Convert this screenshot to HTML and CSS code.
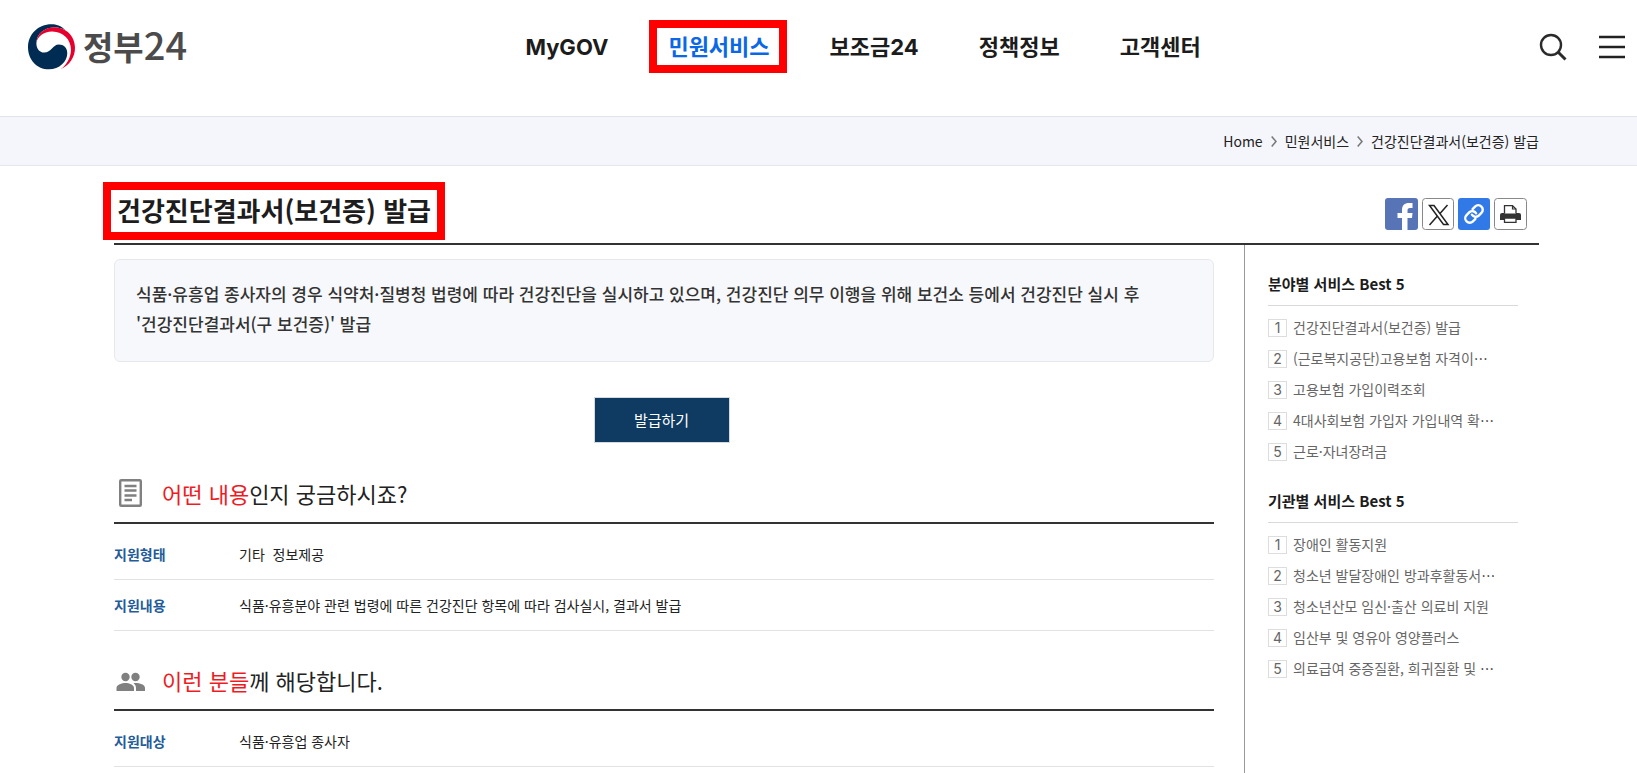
FILE: index.html
```html
<!DOCTYPE html>
<html lang="ko">
<head>
<meta charset="utf-8">
<meta name="viewport" content="width=device-width, initial-scale=1">
<title>건강진단결과서(보건증) 발급 | 정부24</title>
<link rel="stylesheet" href="styles.css">
</head>
<body>
<header class="header">
  <a class="logo" href="#">
    <svg class="logo-mark" viewBox="0 0 140 135" aria-hidden="true">
      <path fill="#002c53" d="M112 18C98 4 84 0 70 0C30 0 0 30 0 68C0 106 27 134 62 134C94 134 117 110 117 86C117 70 106 60 92 60C74 60 70 84 48 84C34 84 25 72 25 57C25 28 50 10 78 9C92 9 103 13 112 18Z"/>
      <path fill="#e6002d" d="M26 52C30 35 45 22 72 21C106 21 128 46 128 75C128 100 114 122 97 134C124 122 140 98 140 70C140 34 112 10 80 9C50 9 27 28 26 52Z"/>
    </svg>
    <span class="logo-text">정부<span class="logo-number">24</span></span>
  </a>
  <nav class="nav" aria-label="주 메뉴">
    <a href="#">MyGOV</a>
    <a class="is-active" href="#">민원서비스</a>
    <a href="#">보조금24</a>
    <a href="#">정책정보</a>
    <a href="#">고객센터</a>
  </nav>
  <div class="tools">
    <button type="button" aria-label="검색">
      <svg width="28" height="28" viewBox="0 0 28 28" fill="none" stroke="#2b2b2b"><circle cx="12" cy="12" r="10" stroke-width="2.4"/><path stroke-width="3" d="M19 19l7.500 7.500"/></svg>
    </button>
    <button type="button" aria-label="전체메뉴">
      <svg width="26" height="28" viewBox="0 0 26 28" stroke="#222" stroke-width="2.600"><path d="M0 4h26M0 14h26M0 24h26"/></svg>
    </button>
  </div>
</header>

<nav class="crumbs" aria-label="현재 위치">
  <a href="#">Home</a>
  <svg width="6" height="12" viewBox="0 0 6 12" fill="none" stroke="#777" stroke-width="1.500"><path d="M.7 1.500L5 6.500L.7 11.500"/></svg>
  <a href="#">민원서비스</a>
  <svg width="6" height="12" viewBox="0 0 6 12" fill="none" stroke="#777" stroke-width="1.500"><path d="M.7 1.500L5 6.500L.7 11.500"/></svg>
  <a href="#">건강진단결과서(보건증) 발급</a>
</nav>

<div class="page">
  <div class="title-bar">
    <h1 class="title">건강진단결과서(보건증) 발급</h1>
    <div class="share">
      <button type="button" aria-label="페이스북 공유">
        <svg width="33" height="32" viewBox="0 0 33 32"><rect width="33" height="32" rx="3" fill="#5674b6"/><path fill="#fff" d="M17 32V20H12.500V15H17V12C17 7.500 19.500 5 24 5H27.500V10H25C23 10 22.500 11 22.500 12.500V15H27.500L27 20H22.500V32Z"/></svg>
      </button>
      <button type="button" aria-label="X 공유">
        <svg width="32" height="32" viewBox="0 0 32 32"><rect x=".5" y=".5" width="31" height="31" rx="3" fill="#fff" stroke="#888"/><path fill="none" stroke="#222" stroke-width="1.500" d="M7.500 7.500H12L26 26.500H21.500ZM25.500 7L18 15.500M15 18.500L7.500 27"/></svg>
      </button>
      <button type="button" aria-label="링크 복사">
        <svg width="32" height="32" viewBox="0 0 32 32"><rect width="32" height="32" rx="3" fill="#3079e6"/><g transform="rotate(-45 16 16)" fill="none" stroke="#fff" stroke-width="2.400" stroke-linecap="round"><path d="M13.500 20.500H10A4.500 4.500 0 0 1 10 11.500H14A4.500 4.500 0 0 1 18 17"/><path d="M18.500 11.500H22A4.500 4.500 0 0 1 22 20.500H18A4.500 4.500 0 0 1 14 15"/></g></svg>
      </button>
      <button type="button" aria-label="인쇄">
        <svg width="33" height="32" viewBox="0 0 33 32"><rect x=".5" y=".5" width="32" height="31" rx="3" fill="#fff" stroke="#888"/><path fill="#333" d="M8 15H25A2 2 0 0 1 27 17V22H6V17A2 2 0 0 1 8 15Z"/><path fill="#fff" stroke="#333" stroke-width="1.300" d="M10.500 15.500V7.700H18.500L22 11V15.500M10.500 20H22V24.300H10.500Z"/><path fill="none" stroke="#333" stroke-width="1.200" d="M18.500 8V11H22"/></svg>
      </button>
    </div>
  </div>

  <div class="columns">
    <main class="main">
      <p class="summary">식품·유흥업 종사자의 경우 식약처·질병청 법령에 따라 건강진단을 실시하고 있으며, 건강진단 의무 이행을 위해 보건소 등에서 건강진단 실시 후<br>'건강진단결과서(구 보건증)' 발급</p>
      <div class="actions">
        <button class="issue" type="button">발급하기</button>
      </div>

      <section class="info">
        <h2 class="info-title">
          <svg width="32" height="32" viewBox="0 0 32 32" fill="none" stroke="#808080"><rect x="6.200" y="3.200" width="20.600" height="25.600" rx="1" stroke-width="2.400"/><path stroke-width="2.400" d="M10.500 9H22.500M10.500 13.500H22.500M10.500 18.500H22.500M10.500 23H18"/></svg>
          <span><em>어떤 내용</em>인지 궁금하시죠?</span>
        </h2>
        <dl class="rows">
          <div><dt>지원형태</dt><dd>기타&nbsp; 정보제공</dd></div>
          <div><dt>지원내용</dt><dd>식품·유흥분야 관련 법령에 따른 건강진단 항목에 따라 검사실시, 결과서 발급</dd></div>
        </dl>
      </section>

      <section class="info">
        <h2 class="info-title">
          <svg width="32" height="32" viewBox="0 0 32 32" fill="#808080"><circle cx="11.500" cy="13" r="4.200"/><circle cx="21.500" cy="13" r="4.200"/><path d="M2.500 27V24C2.500 20.500 8 19 11.500 19S20 20.500 20 24V27ZM22 27V24C22 21.800 21 20.300 19.500 19.200C24 18.700 31 20 31 24V27Z"/></svg>
          <span><em>이런 분들</em>께 해당합니다.</span>
        </h2>
        <dl class="rows">
          <div><dt>지원대상</dt><dd>식품·유흥업 종사자</dd></div>
        </dl>
      </section>
    </main>

    <aside class="side">
      <section class="best">
        <h2>분야별 서비스 Best 5</h2>
        <ol>
          <li><b>1</b><a href="#">건강진단결과서(보건증) 발급</a></li>
          <li><b>2</b><a href="#">(근로복지공단)고용보험 자격이<i>…</i></a></li>
          <li><b>3</b><a href="#">고용보험 가입이력조회</a></li>
          <li><b>4</b><a href="#">4대사회보험 가입자 가입내역 확<i>…</i></a></li>
          <li><b>5</b><a href="#">근로·자녀장려금</a></li>
        </ol>
      </section>
      <section class="best">
        <h2>기관별 서비스 Best 5</h2>
        <ol>
          <li><b>1</b><a href="#">장애인 활동지원</a></li>
          <li><b>2</b><a href="#">청소년 발달장애인 방과후활동서<i>…</i></a></li>
          <li><b>3</b><a href="#">청소년산모 임신·출산 의료비 지원</a></li>
          <li><b>4</b><a href="#">임산부 및 영유아 영양플러스</a></li>
          <li><b>5</b><a href="#">의료급여 중증질환, 희귀질환 및 <i>…</i></a></li>
        </ol>
      </section>
    </aside>
  </div>
</div>
</body>
</html>
```
FILE: styles.css
```css
* {
  box-sizing: border-box;
}

body {
  margin: 0;
  background: #fff;
  color: #222;
  font-family: "Noto Sans CJK KR", sans-serif;
  font-size: 14px;
  line-height: 24px;
}

h1, h2, p, dl, dd, ol {
  margin: 0;
  padding: 0;
}

a {
  color: inherit;
  text-decoration: none;
}

button {
  padding: 0;
  border: 0;
  background: none;
  font-family: inherit;
  cursor: pointer;
}

svg {
  display: block;
  flex: none;
}

em, i {
  font-style: normal;
}

/* Header */
.header {
  display: flex;
  align-items: center;
  justify-content: space-between;
  padding: 24px 12px 46px 28px;
}

.logo {
  display: flex;
  align-items: center;
  gap: 8px;
}

.logo-mark {
  width: 47px;
  height: 46px;
}

.logo-text {
  padding-bottom: 4px;
  color: #4b4b4b;
  font-size: 33px;
  font-weight: 700;
  line-height: 38px;
}

.logo-number {
  font-size: 38px;
  font-weight: 500;
}

.nav {
  display: flex;
  gap: 60px;
  color: #1c1c1c;
  font-family: Inter, "Noto Sans CJK KR", sans-serif;
  font-size: 22px;
  font-weight: 700;
  line-height: 32px;
}

.nav .is-active {
  position: relative;
  color: #0a68e6;
}

.nav .is-active::after {
  content: "";
  position: absolute;
  inset: -11px -17px -10px -19px;
  border: 8px solid #f00;
}

.tools {
  display: flex;
  gap: 32px;
}

/* Breadcrumb */
.crumbs {
  display: flex;
  align-items: center;
  justify-content: flex-end;
  gap: 8px;
  padding: 12px 98px 12px 114px;
  border-top: 1px solid #dfe3ec;
  border-bottom: 1px solid #e4e6ea;
  background: #f5f6fb;
}

/* Page */
.page {
  padding: 0 98px 0 114px;
}

.title-bar {
  display: flex;
  align-items: flex-start;
  justify-content: space-between;
  padding: 16px 12px 3px 0;
  border-bottom: 2px solid #333;
}

.title {
  margin-left: -11px;
  padding: 0 6px 2px;
  border: 8px solid #f00;
  color: #1d1d1d;
  font-size: 26px;
  font-weight: 700;
  line-height: 40px;
}

.share {
  display: flex;
  gap: 4px;
  padding-top: 16px;
}

.columns {
  display: flex;
  gap: 30px;
}

.main {
  flex: 1;
  padding-top: 14px;
}

.summary {
  padding: 19px 21px 22px;
  border: 1px solid #e6e8ee;
  border-radius: 6px;
  background: #f7f8fb;
  color: #333;
  font-size: 17px;
  font-weight: 500;
  line-height: 30px;
}

.actions {
  display: flex;
  justify-content: center;
  padding: 35px 5px 1px 0;
}

.issue {
  width: 136px;
  border: 1px solid #d5dae0;
  background: #0f3a61;
  color: #fff;
  font-size: 15px;
  line-height: 44px;
}

.info-title {
  display: flex;
  align-items: center;
  gap: 16px;
  margin-top: 32px;
  padding-bottom: 12px;
  border-bottom: 2px solid #333;
  font-size: 22px;
  font-weight: 400;
  line-height: 34px;
}

.info-title em {
  color: #ed1c24;
}

.rows {
  padding-top: 5px;
}

.rows div {
  display: flex;
  padding: 13px 0;
  border-bottom: 1px solid #e2e2e2;
}

.rows dt {
  flex: none;
  width: 125px;
  color: #1f5c99;
  font-weight: 700;
}

/* Ranking column */
.side {
  flex: none;
  width: 295px;
  min-height: 528px;
  padding: 26px 21px 0 23px;
  border-left: 1px solid #999;
}

.best {
  margin-bottom: 21px;
}

.best h2 {
  padding-bottom: 9px;
  border-bottom: 1px solid #d9d9d9;
  color: #1c1c1c;
  font-size: 15px;
  font-weight: 700;
  line-height: 25px;
}

.best ol {
  padding-top: 6px;
  color: #666;
  list-style: none;
}

.best li {
  display: flex;
  align-items: center;
  gap: 6px;
  line-height: 31px;
}

.best b {
  width: 19px;
  border: 1px solid #ddd;
  font-family: Inter, sans-serif;
  font-weight: 400;
  line-height: 16px;
  text-align: center;
}

.best i {
  color: #222;
}
```
